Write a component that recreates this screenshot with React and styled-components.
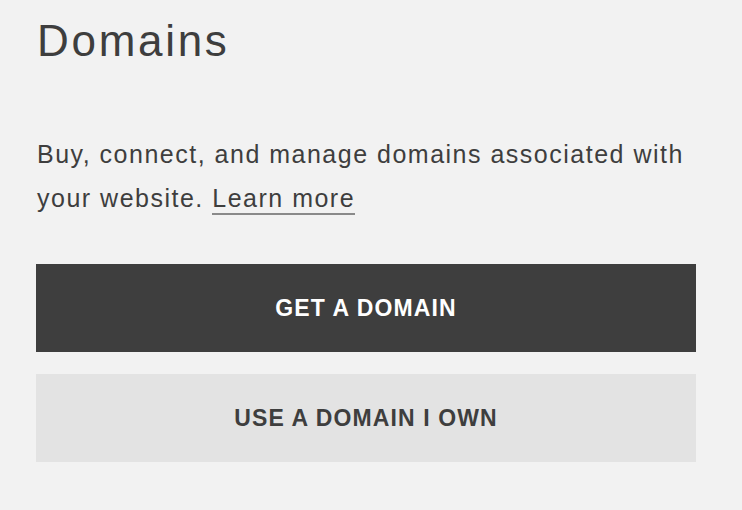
import React from 'react';
import styled, { createGlobalStyle } from 'styled-components';

const GlobalStyle = createGlobalStyle`
  html, body {
    margin: 0;
    padding: 0;
    background: #f2f2f2;
  }
  body {
    font-family: 'Liberation Sans', Arial, sans-serif;
    color: #3e3e3e;
  }
`;

const Panel = styled.div`
  width: 660px;
  padding: 15px 0 48px 37px;
`;

const Title = styled.h1`
  margin: 0;
  font-size: 44px;
  font-weight: 400;
  line-height: 52px;
  letter-spacing: 2.7px;
  color: #3e3e3e;
`;

const Description = styled.p`
  margin: 65px 0 0;
  font-size: 25px;
  line-height: 44px;
  letter-spacing: 1.5px;
  color: #3e3e3e;
`;

const LearnMore = styled.a`
  color: inherit;
  text-decoration: none;
  border-bottom: 2px solid #8a8a8a;
  padding-bottom: 1px;
`;

const Actions = styled.div`
  display: flex;
  flex-direction: column;
  gap: 22px;
  margin-top: 44px;
  margin-left: -1px;
`;

const Button = styled.button`
  display: flex;
  align-items: center;
  justify-content: center;
  height: 88px;
  width: 660px;
  border: none;
  padding: 0;
  font-family: 'Liberation Sans', Arial, sans-serif;
  font-size: 23px;
  font-weight: 700;
  letter-spacing: 1.1px;
  text-transform: uppercase;
  background: ${({ $primary }) => ($primary ? '#3e3e3e' : '#e3e3e3')};
  color: ${({ $primary }) => ($primary ? '#ffffff' : '#3e3e3e')};
  cursor: pointer;
`;

const App = () => (
  <>
    <GlobalStyle />
    <Panel>
      <Title>Domains</Title>
      <Description>
        Buy, connect, and manage domains associated with your website.{' '}
        <LearnMore href="#">Learn more</LearnMore>
      </Description>
      <Actions>
        <Button $primary>Get a Domain</Button>
        <Button>Use a Domain I Own</Button>
      </Actions>
    </Panel>
  </>
);

export default App;
